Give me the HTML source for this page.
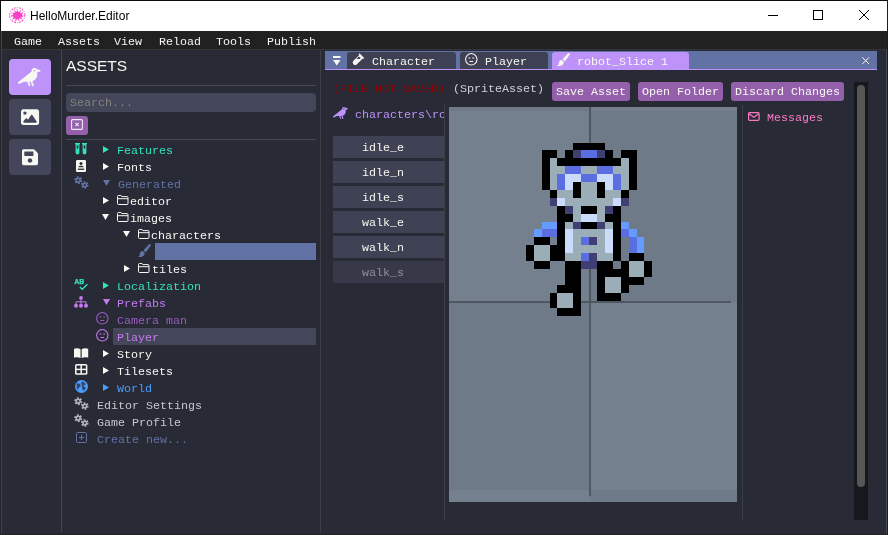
<!DOCTYPE html>
<html><head><meta charset="utf-8"><title>HelloMurder.Editor</title>
<style>
*{margin:0;padding:0;box-sizing:border-box}
html,body{width:888px;height:535px;overflow:hidden;background:#282a36}
body{position:relative;font-family:"Liberation Mono","DejaVu Sans Mono",monospace;font-size:11.67px;letter-spacing:0;color:#f8f8f2;line-height:17px}
.a{position:absolute}
.t{position:absolute;white-space:pre;height:17px}
.t,.btn span,.an span{will-change:transform}
#title{left:0;top:0;width:888px;height:31px;background:#fff}
#title .name{left:29.5px;top:8px;font-family:"Liberation Sans",sans-serif;font-size:12px;letter-spacing:0;color:#000;line-height:16px}
#menu{left:0;top:31px;width:888px;height:18px;background:#212121}
#menu .t{top:2.6px;color:#f4f4f0}
svg{position:absolute;overflow:visible}
.sb{left:9px;width:42px;height:36px;border-radius:4px;background:#43465b}
.btn{top:82px;height:19px;border-radius:3px;background:#9460ab;color:#f8f8f2}
.btn span{position:absolute;left:4px;top:2px;white-space:pre}
.an{left:333px;width:111px;height:22px;background:#3f4155}
.an span{position:absolute;left:29px;top:4px;white-space:pre}
#sprite i{position:absolute;display:block}
</style></head><body>
<!-- title bar -->
<div id="title" class="a">
  <svg style="left:9px;top:6.8px" width="16.4" height="16.400" viewBox="0 0 16 16"><circle cx="8" cy="8" r="7.400" fill="none" stroke="#fd55cc" stroke-width="1.100" stroke-dasharray="1.6 1.1 .8 1.300 2.100 1"/><circle cx="8" cy="8" r="5.600" fill="none" stroke="#fd55cc" stroke-width="1" stroke-dasharray=".9 2.300 1.200 1.900"/><path d="M8.500 3.200l.9 1.800 1.500-1 .3 1.900 2.200.3-.8 1.600 1.100 1.400-1.900.8.200 1.500-2.100-.3-.4 2.100-1.400-1.500-1.500 1.600-.5-2.200-2.300.3.500-1.700-1.500-1.200 1.300-1.200-.6-1.900 2.100-.1.200-1.600 1.600.9z" fill="#fb3fc6"/></svg>
  <div class="t name">HelloMurder.Editor</div>
  <svg style="left:768px;top:10px" width="101" height="11" viewBox="0 0 101 11" fill="none" stroke="#000" stroke-width="1"><path d="M0 5.500h10"/><rect x="45.500" y=".5" width="9" height="9"/><path d="M91 0l10 10M101 0l-10 10"/></svg>
</div>
<div class="a" style="left:0;top:0;width:888px;height:1px;background:#0c0c0c"></div><div class="a" style="left:0;top:0;width:1px;height:31px;background:#0c0c0c"></div>
<!-- menu -->
<div id="menu" class="a">
  <div class="t" style="left:14px">Game</div>
  <div class="t" style="left:57.5px">Assets</div>
  <div class="t" style="left:114px">View</div>
  <div class="t" style="left:159px">Reload</div>
  <div class="t" style="left:216px">Tools</div>
  <div class="t" style="left:267px">Publish</div>
</div>
<div class="a" style="left:0;top:49px;width:888px;height:1px;background:#34353c"></div>
<!-- window borders -->
<div class="a" style="left:0;top:31px;width:1px;height:504px;background:#222228"></div>
<div class="a" style="left:1px;top:31px;width:1px;height:503px;background:#404254"></div>
<div class="a" style="left:0;top:534px;width:888px;height:1px;background:#222224"></div>
<div class="a" style="left:886px;top:50px;width:1px;height:484px;background:#474a5c"></div><div class="a" style="left:887px;top:0;width:1px;height:535px;background:#1c1c1e"></div>
<!-- sidebar -->
<div class="a sb" style="top:59px;background:#bd93f9"></div>
<div class="a sb" style="top:99px"></div>
<div class="a sb" style="top:139px"></div>
<div class="a" style="left:61px;top:50px;width:1px;height:482px;background:#46464e"></div>
<svg style="left:17.8px;top:67.9px" width="22.7" height="18.2" viewBox="0 0 640 512" fill="#f8f8f2" fill-rule="evenodd"><path d="M544 32h-16.36C513.04 12.68 490.09 0 464 0c-44.18 0-80 35.82-80 80v20.98L12.09 393.57A30.216 30.216 0 0 0 0 417.74c0 22.46 23.64 37.07 43.73 27.03L165.27 384h96.49l44.41 120.1c2.27 6.23 9.15 9.44 15.38 7.17l22.55-8.21c6.23-2.27 9.44-9.15 7.17-15.38L312.94 384H352c1.91 0 3.76-.23 5.66-.29l44.51 120.38c2.27 6.23 9.15 9.44 15.38 7.17l22.55-8.21c6.23-2.27 9.44-9.15 7.17-15.38l-41.24-111.53C485.74 352.8 544 279.26 544 192v-80l96-16c0-35.35-42.98-64-96-64zm-80 72c-13.25 0-24-10.75-24-24 0-13.26 10.75-24 24-24s24 10.74 24 24c0 13.25-10.75 24-24 24z"/></svg>
<svg style="left:20.9px;top:108.2px" width="18.1" height="18.1" viewBox="0 0 512 512" fill="#f8f8f2" fill-rule="evenodd"><path d="M0 96C0 60.7 28.7 32 64 32H448c35.3 0 64 28.7 64 64V416c0 35.3-28.7 64-64 64H64c-35.3 0-64-28.7-64-64V96zM323.8 202.5c-4.500-6.600-11.900-10.500-19.800-10.500s-15.400 3.900-19.800 10.500l-87 127.600L170.700 297c-4.600-5.700-11.500-9-18.700-9s-14.200 3.300-18.700 9l-64 80c-5.800 7.200-6.900 17.100-2.900 25.400s12.400 13.600 21.600 13.600h96 32H424c8.900 0 17.100-4.900 21.200-12.800s3.600-17.400-1.400-24.700l-120-176zM112 192a48 48 0 1 0 0-96 48 48 0 1 0 0 96z"/></svg>
<svg style="left:22px;top:147.8px" width="16" height="18.3" viewBox="0 0 448 512" fill="#f8f8f2" fill-rule="evenodd"><path d="M433.941 129.941l-83.882-83.882A48 48 0 0 0 316.118 32H48C21.49 32 0 53.49 0 80v352c0 26.51 21.49 48 48 48h352c26.51 0 48-21.49 48-48V163.882a48 48 0 0 0-14.059-33.941zM224 416c-35.346 0-64-28.654-64-64 0-35.346 28.654-64 64-64s64 28.654 64 64c0 35.346-28.654 64-64 64zm96-304.52V212c0 6.627-5.373 12-12 12H76c-6.627 0-12-5.373-12-12V108c0-6.627 5.373-12 12-12h228.52c3.183 0 6.235 1.264 8.485 3.515l3.48 3.48A11.996 11.996 0 0 1 320 111.48z"/></svg>
<!-- assets panel -->
<div class="t" style="left:66px;top:56.4px;font-family:'Liberation Sans',sans-serif;font-size:15.5px;letter-spacing:0;line-height:20px;height:20px">ASSETS</div>
<div class="a" style="left:66px;top:85px;width:250px;height:1px;background:#44465a"></div>
<div class="a" style="left:66px;top:93px;width:250px;height:19px;border-radius:4px;background:#44475a"></div>
<div class="t" style="left:70px;top:95px;color:#85827e">Search...</div>
<div class="a" style="left:66px;top:116px;width:22px;height:19px;border-radius:3px;background:#9460ab"></div>
<svg style="left:71px;top:119px" width="12" height="11" viewBox="0 0 12 11" fill="none" stroke="#f0e8f8" stroke-width="1.1"><rect x=".6" y=".6" width="10.800" height="9.800" rx="1"/><path d="M4.300 3.800l3.400 3.400M7.700 3.800l-3.400 3.400"/></svg>
<div class="a" style="left:66px;top:139px;width:250px;height:1px;background:#44465a"></div>
<div class="a" style="left:320px;top:50px;width:1px;height:482px;background:#3c3d45"></div>
<!-- tree -->
<div class="a" style="left:155px;top:243px;width:161px;height:17px;background:#6272a4"></div>
<div class="a" style="left:113px;top:328px;width:203px;height:17px;background:#44475a"></div>
<svg style="left:75px;top:143px" width="12" height="12" viewBox="0 0 12 12" fill="#33e2bc"><path d="M0 0h5v1.300h-.6v8.200a1.900 1.900 0 0 1-3.800 0v-8.200h-.6z"/><path d="M7 0h5v1.300h-.6v8.200a1.900 1.900 0 0 1-3.800 0v-8.200h-.6z"/><rect x="1.700" y="2.500" width="1.600" height="3" fill="#282a36"/><rect x="8.700" y="2.500" width="1.600" height="3" fill="#282a36"/></svg>
<svg style="left:103.4px;top:145.5px" width="6" height="7" viewBox="0 0 6 7"><path d="M0 0v7l6-3.500z" fill="#33e2bc"/></svg>
<div class="t" style="left:117px;top:142.5px;color:#33e2bc">Features</div>
<svg style="left:76px;top:159.5px" width="10" height="12" viewBox="0 0 10 12"><rect width="10" height="12" rx="1.200" fill="#f8f8f2"/><circle cx="5" cy="3.600" r="1.500" fill="#282a36"/><path d="M2.200 7.200c0-2 5.600-2 5.600 0z" fill="#282a36"/><rect x="1.800" y="8.600" width="6.400" height="1.300" fill="#282a36"/></svg>
<svg style="left:103.4px;top:162.5px" width="6" height="7" viewBox="0 0 6 7"><path d="M0 0v7l6-3.500z" fill="#f8f8f2"/></svg>
<div class="t" style="left:117px;top:159.5px;color:#f8f8f2">Fonts</div>
<svg style="left:74px;top:176px" width="15" height="13" viewBox="0 0 15 13" fill="none" stroke="#6272a4"><circle cx="4.200" cy="4.200" r="2.800" stroke-width="2.400" stroke-dasharray="1.600 1.330"/><circle cx="4.200" cy="4.200" r="1.900" stroke-width="1.600"/><circle cx="10.800" cy="9" r="2.700" stroke-width="2.300" stroke-dasharray="1.550 1.280"/><circle cx="10.800" cy="9" r="1.800" stroke-width="1.500"/></svg>
<svg style="left:103.4px;top:180px" width="7" height="6" viewBox="0 0 7 6"><path d="M0 0h7l-3.500 6z" fill="#6272a4"/></svg>
<div class="t" style="left:118px;top:176.5px;color:#6272a4">Generated</div>
<svg style="left:103.4px;top:196.5px" width="6" height="7" viewBox="0 0 6 7"><path d="M0 0v7l6-3.500z" fill="#f8f8f2"/></svg>
<svg style="left:117px;top:195.0px" width="11.5" height="10" viewBox="0 0 11.5 10" fill="none" stroke="#f8f8f2" stroke-width="1"><path d="M.5 1.500a1 1 0 0 1 1-1h2.400l1.100 1.100h5a1 1 0 0 1 1 1v5.900a1 1 0 0 1-1 1h-8.500a1 1 0 0 1-1-1z"/><path d="M.5 3.700h10.500"/></svg>
<div class="t" style="left:130px;top:193.5px;color:#f8f8f2">editor</div>
<svg style="left:102.4px;top:214px" width="7" height="6" viewBox="0 0 7 6"><path d="M0 0h7l-3.500 6z" fill="#f8f8f2"/></svg>
<svg style="left:117px;top:212.0px" width="11.5" height="10" viewBox="0 0 11.5 10" fill="none" stroke="#f8f8f2" stroke-width="1"><path d="M.5 1.500a1 1 0 0 1 1-1h2.400l1.100 1.100h5a1 1 0 0 1 1 1v5.900a1 1 0 0 1-1 1h-8.500a1 1 0 0 1-1-1z"/><path d="M.5 3.700h10.500"/></svg>
<div class="t" style="left:130px;top:210.5px;color:#f8f8f2">images</div>
<svg style="left:123.4px;top:231px" width="7" height="6" viewBox="0 0 7 6"><path d="M0 0h7l-3.500 6z" fill="#f8f8f2"/></svg>
<svg style="left:138px;top:229.0px" width="11.5" height="10" viewBox="0 0 11.5 10" fill="none" stroke="#f8f8f2" stroke-width="1"><path d="M.5 1.500a1 1 0 0 1 1-1h2.400l1.100 1.100h5a1 1 0 0 1 1 1v5.900a1 1 0 0 1-1 1h-8.500a1 1 0 0 1-1-1z"/><path d="M.5 3.700h10.500"/></svg>
<div class="t" style="left:151px;top:227.5px;color:#f8f8f2">characters</div>
<svg style="left:138px;top:244px" width="13" height="13" viewBox="0 0 13 13" fill="#6272a4"><path d="M12.600.3c.5.500.3 1.200-.1 1.800l-4.700 6.400-2.300-2.300 5.300-5.700c.5-.5 1.300-.7 1.800-.2z"/><path d="M4.700 7l2 2c.2 2.300-1.600 3.900-3.800 3.900h-2.900c1.500-.5 1.700-1.500 1.800-2.800.1-1.900 1.300-3.100 2.900-3.100z"/></svg>
<svg style="left:124.4px;top:264.5px" width="6" height="7" viewBox="0 0 6 7"><path d="M0 0v7l6-3.500z" fill="#f8f8f2"/></svg>
<svg style="left:138px;top:263.0px" width="11.5" height="10" viewBox="0 0 11.5 10" fill="none" stroke="#f8f8f2" stroke-width="1"><path d="M.5 1.500a1 1 0 0 1 1-1h2.400l1.100 1.100h5a1 1 0 0 1 1 1v5.900a1 1 0 0 1-1 1h-8.500a1 1 0 0 1-1-1z"/><path d="M.5 3.700h10.500"/></svg>
<div class="t" style="left:151.5px;top:261.5px;color:#f8f8f2">tiles</div>
<svg style="left:74px;top:278px" width="14" height="14" viewBox="0 0 14 14"><text x="0.3" y="6" font-family="Liberation Sans,sans-serif" font-weight="bold" font-size="6.9" letter-spacing="0" stroke="#33e2bc" stroke-width=".25" fill="#33e2bc">AB</text><path d="M5.900 9l2.300 2.300 5.200-5" fill="none" stroke="#33e2bc" stroke-width="1.400"/></svg>
<svg style="left:103.4px;top:281.5px" width="6" height="7" viewBox="0 0 6 7"><path d="M0 0v7l6-3.500z" fill="#33e2bc"/></svg>
<div class="t" style="left:117px;top:278.5px;color:#33e2bc">Localization</div>
<svg style="left:74px;top:296px" width="14" height="12" viewBox="0 0 14 12" fill="#c77af2"><circle cx="7" cy="1.900" r="1.900"/><circle cx="2" cy="9.700" r="2"/><circle cx="7" cy="9.700" r="2"/><circle cx="12" cy="9.700" r="2"/><path d="M7 3.500v5M2 8.200v-2.400h10v2.400" fill="none" stroke="#c77af2" stroke-width="1"/></svg>
<svg style="left:103.4px;top:299px" width="7" height="6" viewBox="0 0 7 6"><path d="M0 0h7l-3.500 6z" fill="#c77af2"/></svg>
<div class="t" style="left:117px;top:295.5px;color:#c77af2">Prefabs</div>
<svg style="left:96px;top:312px" width="12.6" height="12.6" viewBox="0 0 13 13" fill="none" stroke="#9a5cc0" stroke-width="1.100"><circle cx="6.500" cy="6.500" r="5.900"/><path d="M4.600 8.700h3.800M3.600 5.200h1.900M7.500 5.200h1.900"/></svg>
<div class="t" style="left:117px;top:312.5px;color:#9a5cc0">Camera man</div>
<svg style="left:96px;top:329px" width="12.6" height="12.6" viewBox="0 0 13 13" fill="none" stroke="#c77af2" stroke-width="1.100"><circle cx="6.500" cy="6.500" r="5.900"/><path d="M4.600 8.700h3.800M3.600 5.200h1.900M7.500 5.200h1.900"/></svg>
<div class="t" style="left:117px;top:329.5px;color:#c77af2">Player</div>
<svg style="left:74px;top:347.5px" width="14.2" height="10.500" viewBox="0 0 15 11" preserveAspectRatio="none" fill="#f8f8f2"><path d="M0 .8c2.500-1 5-.8 6.900.4v9.400c-2-1-4.400-1.100-6.900-.4z"/><path d="M15 .8c-2.500-1-5-.8-6.900.4v9.400c2-1 4.400-1.100 6.900-.4z"/></svg>
<svg style="left:103.4px;top:349.5px" width="6" height="7" viewBox="0 0 6 7"><path d="M0 0v7l6-3.500z" fill="#f8f8f2"/></svg>
<div class="t" style="left:117px;top:346.5px;color:#f8f8f2">Story</div>
<svg style="left:75px;top:364px" width="12.4" height="10.800" viewBox="0 0 13 12" preserveAspectRatio="none"><rect width="13" height="12" rx="1.800" fill="#f8f8f2"/><rect x="1.600" y="1.700" width="4.100" height="3.500" fill="#282a36"/><rect x="7.300" y="1.700" width="4.100" height="3.500" fill="#282a36"/><rect x="1.600" y="6.800" width="4.100" height="3.500" fill="#282a36"/><rect x="7.300" y="6.800" width="4.100" height="3.500" fill="#282a36"/></svg>
<svg style="left:103.4px;top:366.5px" width="6" height="7" viewBox="0 0 6 7"><path d="M0 0v7l6-3.500z" fill="#f8f8f2"/></svg>
<div class="t" style="left:117px;top:363.5px;color:#f8f8f2">Tilesets</div>
<svg style="left:75px;top:380px" width="13" height="13" viewBox="0 0 13 13"><circle cx="6.500" cy="6.500" r="6.500" fill="#4a9dff"/><path d="M2 3.500c1.500-.5 2.500.5 3.500 1.500s-.5 2-1.500 2.500-.5 2.500-1 2.500-2-3-1-6.500zM7.500 1.500c1 .5 2.500 1 3 2.500s-1.500.5-2 1.500 1.500 1 2 2-1 3-2 3-1-2-1.500-3 .5-2-.5-3 0-2.500 1-3z" fill="#282a36" opacity=".75"/></svg>
<svg style="left:103.4px;top:383.5px" width="6" height="7" viewBox="0 0 6 7"><path d="M0 0v7l6-3.500z" fill="#4a9dff"/></svg>
<div class="t" style="left:117px;top:380.5px;color:#4a9dff">World</div>
<svg style="left:74px;top:397px" width="15" height="13" viewBox="0 0 15 13" fill="none" stroke="#b2b2ba"><circle cx="4.200" cy="4.200" r="2.800" stroke-width="2.400" stroke-dasharray="1.600 1.330"/><circle cx="4.200" cy="4.200" r="1.900" stroke-width="1.600"/><circle cx="10.800" cy="9" r="2.700" stroke-width="2.300" stroke-dasharray="1.550 1.280"/><circle cx="10.800" cy="9" r="1.800" stroke-width="1.500"/></svg>
<div class="t" style="left:97px;top:397.5px;color:#c6c6cc">Editor Settings</div>
<svg style="left:74px;top:414px" width="15" height="13" viewBox="0 0 15 13" fill="none" stroke="#b2b2ba"><circle cx="4.200" cy="4.200" r="2.800" stroke-width="2.400" stroke-dasharray="1.600 1.330"/><circle cx="4.200" cy="4.200" r="1.900" stroke-width="1.600"/><circle cx="10.800" cy="9" r="2.700" stroke-width="2.300" stroke-dasharray="1.550 1.280"/><circle cx="10.800" cy="9" r="1.800" stroke-width="1.500"/></svg>
<div class="t" style="left:97px;top:414.5px;color:#c6c6cc">Game Profile</div>
<svg style="left:76px;top:432px" width="11" height="11" viewBox="0 0 11 11" fill="none" stroke="#6272a4" stroke-width="1"><rect x=".5" y=".5" width="10" height="10" rx="1.200"/><path d="M5.500 3v5M3 5.500h5"/></svg>
<div class="t" style="left:97px;top:431.5px;color:#6272a4">Create new...</div>
<!-- tab bar -->
<div class="a" style="left:325px;top:51px;width:552px;height:18px;background:#6272a4"></div>
<div class="a" style="left:325px;top:69px;width:552px;height:1px;background:#bd93f9"></div>
<div class="a" style="left:347px;top:52px;width:109px;height:17px;border-radius:3px 3px 0 0;background:#3e4054"></div>
<div class="a" style="left:460px;top:52px;width:88px;height:17px;border-radius:3px 3px 0 0;background:#3e4054"></div>
<div class="a" style="left:552px;top:52px;width:137px;height:18px;border-radius:3px 3px 0 0;background:#bd93f9"></div>
<div class="t" style="left:372px;top:53.5px">Character</div>
<div class="t" style="left:485px;top:53.5px">Player</div>
<div class="t" style="left:577px;top:53.5px">robot_Slice 1</div>
<svg style="left:333px;top:55.7px" width="7.5" height="9.500" viewBox="0 0 7.500 9.500" fill="#f8f8f2"><rect width="7.500" height="2"/><path d="M0 3.900h7.500l-3.750 5.600z"/></svg>
<svg style="left:351.8px;top:53.3px" width="12.5" height="12.5" viewBox="0 0 12 12" fill="#f8f8f2"><path d="M7.200.3l4.500 4.500-.9.900-.5-.5-5.600 5.600a2.300 2.300 0 0 1-3.300-3.300l5.600-5.600-.6-.6z"/><path d="M6.600 3.300l-2.400 2.400h3.400l.8-.8z" fill="#3e4054"/></svg>
<svg style="left:465px;top:53px" width="12.6" height="12.6" viewBox="0 0 13 13" fill="none" stroke="#f8f8f2" stroke-width="1.100"><circle cx="6.500" cy="6.500" r="5.900"/><path d="M4.600 8.700h3.800M3.600 5.200h1.900M7.500 5.200h1.900"/></svg>
<svg style="left:557px;top:53px" width="13" height="13" viewBox="0 0 13 13" fill="#f8f8f2"><path d="M12.600.3c.5.500.3 1.200-.1 1.800l-4.700 6.400-2.300-2.300 5.300-5.700c.5-.5 1.300-.7 1.800-.2z"/><path d="M4.700 7l2 2c.2 2.300-1.600 3.900-3.800 3.900h-2.900c1.500-.5 1.700-1.500 1.800-2.800.1-1.900 1.300-3.100 2.900-3.100z"/></svg>
<svg style="left:861.8px;top:56.8px" width="7.4" height="7.400" viewBox="0 0 7.400 7.400" stroke="#f8f8f2" stroke-width="1"><path d="M.3.300l6.800 6.800M7.100.3l-6.800 6.800"/></svg>
<svg style="left:333px;top:106.5px" width="15" height="12" viewBox="0 0 640 512" fill="#bd93f9" fill-rule="evenodd"><path d="M544 32h-16.36C513.04 12.68 490.09 0 464 0c-44.18 0-80 35.82-80 80v20.98L12.09 393.57A30.216 30.216 0 0 0 0 417.74c0 22.46 23.64 37.07 43.73 27.03L165.27 384h96.49l44.41 120.1c2.27 6.23 9.15 9.44 15.38 7.17l22.55-8.21c6.23-2.27 9.44-9.15 7.17-15.38L312.94 384H352c1.91 0 3.76-.23 5.66-.29l44.51 120.38c2.27 6.23 9.15 9.44 15.38 7.17l22.55-8.21c6.23-2.27 9.44-9.15 7.17-15.38l-41.24-111.53C485.74 352.8 544 279.26 544 192v-80l96-16c0-35.35-42.98-64-96-64zm-80 72c-13.25 0-24-10.75-24-24 0-13.26 10.75-24 24-24s24 10.74 24 24c0 13.25-10.75 24-24 24z"/></svg>
<!-- header row -->
<div class="t" style="left:333px;top:81px;color:#8e0000">(FILE NOT SAVED)</div>
<div class="t" style="left:453px;top:81px;color:#cfcfd6">(SpriteAsset)</div>
<div class="a btn" style="left:552px;width:78px"><span>Save Asset</span></div>
<div class="a btn" style="left:638px;width:85px"><span>Open Folder</span></div>
<div class="a btn" style="left:731px;width:113px"><span>Discard Changes</span></div>
<!-- scrollbar -->
<div class="a" style="left:854px;top:82px;width:14px;height:438px;background:#17181e"></div>
<div class="a" style="left:857px;top:85px;width:8px;height:402px;border-radius:4px;background:#565656"></div>
<!-- anim list -->
<div class="t" style="left:355px;top:107px;color:#bd93f9;width:89px;overflow:hidden">characters\robot</div>
<div class="a an" style="top:136px"><span>idle_e</span></div>
<div class="a an" style="top:161px"><span>idle_n</span></div>
<div class="a an" style="top:186px"><span>idle_s</span></div>
<div class="a an" style="top:211px"><span>walk_e</span></div>
<div class="a an" style="top:236px"><span>walk_n</span></div>
<div class="a an" style="top:261px;background:#373949;color:#8d8f9d"><span>walk_s</span></div>
<div class="a" style="left:444px;top:105px;width:1px;height:415px;background:#3c3d46"></div>
<!-- canvas -->
<div class="a" style="left:449px;top:107px;width:288px;height:395px;background:#74808e"></div>
<div class="a" style="left:590px;top:107px;width:147px;height:195px;background:#6e7a88"></div>
<div class="a" style="left:449px;top:107px;width:141px;height:4px;background:#6e7a88"></div><div class="a" style="left:590px;top:107px;width:147px;height:4px;background:#74808e"></div>
<div class="a" style="left:449px;top:302px;width:141px;height:188px;background:#6e7a88"></div>
<div class="a" style="left:449px;top:490px;width:141px;height:12px;background:#74808e"></div><div class="a" style="left:590px;top:490px;width:147px;height:12px;background:#6e7a88"></div>
<div class="a" style="left:449px;top:301px;width:282px;height:2px;background:#4f5762"></div>
<div class="a" style="left:589px;top:107px;width:2px;height:389px;background:#4f5762"></div>
<div id="sprite">
<i style="left:573px;top:143px;width:32px;height:7px;background:#000"></i>
<i style="left:542px;top:150px;width:15px;height:8px;background:#000"></i>
<i style="left:565px;top:150px;width:8px;height:8px;background:#000"></i>
<i style="left:573px;top:150px;width:8px;height:8px;background:#3f3f74"></i>
<i style="left:581px;top:150px;width:16px;height:8px;background:#5b6ee1"></i>
<i style="left:597px;top:150px;width:8px;height:8px;background:#3f3f74"></i>
<i style="left:605px;top:150px;width:8px;height:8px;background:#000"></i>
<i style="left:621px;top:150px;width:16px;height:8px;background:#000"></i>
<i style="left:542px;top:158px;width:8px;height:8px;background:#000"></i>
<i style="left:550px;top:158px;width:7px;height:8px;background:#9badb7"></i>
<i style="left:557px;top:158px;width:64px;height:8px;background:#000"></i>
<i style="left:621px;top:158px;width:8px;height:8px;background:#9badb7"></i>
<i style="left:629px;top:158px;width:8px;height:8px;background:#000"></i>
<i style="left:542px;top:166px;width:8px;height:8px;background:#000"></i>
<i style="left:550px;top:166px;width:15px;height:8px;background:#9badb7"></i>
<i style="left:565px;top:166px;width:16px;height:8px;background:#5b6ee1"></i>
<i style="left:581px;top:166px;width:16px;height:8px;background:#9badb7"></i>
<i style="left:597px;top:166px;width:16px;height:8px;background:#5b6ee1"></i>
<i style="left:613px;top:166px;width:16px;height:8px;background:#9badb7"></i>
<i style="left:629px;top:166px;width:8px;height:8px;background:#000"></i>
<i style="left:542px;top:174px;width:8px;height:8px;background:#000"></i>
<i style="left:550px;top:174px;width:7px;height:8px;background:#9badb7"></i>
<i style="left:557px;top:174px;width:8px;height:8px;background:#5b6ee1"></i>
<i style="left:565px;top:174px;width:16px;height:8px;background:#cbdbfc"></i>
<i style="left:581px;top:174px;width:16px;height:8px;background:#5b6ee1"></i>
<i style="left:597px;top:174px;width:16px;height:8px;background:#cbdbfc"></i>
<i style="left:613px;top:174px;width:8px;height:8px;background:#5b6ee1"></i>
<i style="left:621px;top:174px;width:8px;height:8px;background:#9badb7"></i>
<i style="left:629px;top:174px;width:8px;height:8px;background:#000"></i>
<i style="left:542px;top:182px;width:8px;height:8px;background:#000"></i>
<i style="left:550px;top:182px;width:7px;height:8px;background:#9badb7"></i>
<i style="left:557px;top:182px;width:8px;height:8px;background:#5b6ee1"></i>
<i style="left:565px;top:182px;width:8px;height:8px;background:#cbdbfc"></i>
<i style="left:573px;top:182px;width:8px;height:8px;background:#000"></i>
<i style="left:581px;top:182px;width:16px;height:8px;background:#9badb7"></i>
<i style="left:597px;top:182px;width:8px;height:8px;background:#000"></i>
<i style="left:605px;top:182px;width:8px;height:8px;background:#cbdbfc"></i>
<i style="left:613px;top:182px;width:8px;height:8px;background:#5b6ee1"></i>
<i style="left:621px;top:182px;width:8px;height:8px;background:#9badb7"></i>
<i style="left:629px;top:182px;width:8px;height:8px;background:#000"></i>
<i style="left:550px;top:190px;width:7px;height:8px;background:#000"></i>
<i style="left:557px;top:190px;width:16px;height:8px;background:#9badb7"></i>
<i style="left:573px;top:190px;width:8px;height:8px;background:#000"></i>
<i style="left:581px;top:190px;width:16px;height:8px;background:#9badb7"></i>
<i style="left:597px;top:190px;width:8px;height:8px;background:#000"></i>
<i style="left:605px;top:190px;width:16px;height:8px;background:#9badb7"></i>
<i style="left:621px;top:190px;width:8px;height:8px;background:#000"></i>
<i style="left:550px;top:198px;width:7px;height:8px;background:#3f3f74"></i>
<i style="left:557px;top:198px;width:8px;height:8px;background:#cbdbfc"></i>
<i style="left:565px;top:198px;width:48px;height:8px;background:#9badb7"></i>
<i style="left:613px;top:198px;width:8px;height:8px;background:#cbdbfc"></i>
<i style="left:621px;top:198px;width:8px;height:8px;background:#3f3f74"></i>
<i style="left:557px;top:206px;width:8px;height:8px;background:#000"></i>
<i style="left:565px;top:206px;width:8px;height:8px;background:#3f3f74"></i>
<i style="left:573px;top:206px;width:8px;height:8px;background:#9badb7"></i>
<i style="left:581px;top:206px;width:16px;height:8px;background:#000"></i>
<i style="left:597px;top:206px;width:8px;height:8px;background:#9badb7"></i>
<i style="left:605px;top:206px;width:8px;height:8px;background:#3f3f74"></i>
<i style="left:613px;top:206px;width:8px;height:8px;background:#000"></i>
<i style="left:557px;top:214px;width:16px;height:8px;background:#000"></i>
<i style="left:573px;top:214px;width:8px;height:8px;background:#9badb7"></i>
<i style="left:581px;top:214px;width:16px;height:8px;background:#cbdbfc"></i>
<i style="left:597px;top:214px;width:8px;height:8px;background:#9badb7"></i>
<i style="left:605px;top:214px;width:16px;height:8px;background:#000"></i>
<i style="left:542px;top:222px;width:15px;height:7px;background:#639bff"></i>
<i style="left:557px;top:222px;width:8px;height:7px;background:#000"></i>
<i style="left:565px;top:222px;width:8px;height:7px;background:#9badb7"></i>
<i style="left:573px;top:222px;width:8px;height:7px;background:#3f3f74"></i>
<i style="left:581px;top:222px;width:16px;height:7px;background:#000"></i>
<i style="left:597px;top:222px;width:8px;height:7px;background:#3f3f74"></i>
<i style="left:605px;top:222px;width:8px;height:7px;background:#9badb7"></i>
<i style="left:613px;top:222px;width:8px;height:7px;background:#000"></i>
<i style="left:621px;top:222px;width:8px;height:7px;background:#639bff"></i>
<i style="left:534px;top:229px;width:8px;height:8px;background:#639bff"></i>
<i style="left:542px;top:229px;width:15px;height:8px;background:#5b6ee1"></i>
<i style="left:557px;top:229px;width:8px;height:8px;background:#000"></i>
<i style="left:565px;top:229px;width:8px;height:8px;background:#cbdbfc"></i>
<i style="left:573px;top:229px;width:32px;height:8px;background:#9badb7"></i>
<i style="left:605px;top:229px;width:8px;height:8px;background:#cbdbfc"></i>
<i style="left:613px;top:229px;width:8px;height:8px;background:#000"></i>
<i style="left:621px;top:229px;width:8px;height:8px;background:#5b6ee1"></i>
<i style="left:629px;top:229px;width:8px;height:8px;background:#639bff"></i>
<i style="left:534px;top:237px;width:16px;height:8px;background:#000"></i>
<i style="left:557px;top:237px;width:8px;height:8px;background:#000"></i>
<i style="left:565px;top:237px;width:8px;height:8px;background:#cbdbfc"></i>
<i style="left:573px;top:237px;width:8px;height:8px;background:#9badb7"></i>
<i style="left:581px;top:237px;width:8px;height:8px;background:#5b6ee1"></i>
<i style="left:589px;top:237px;width:8px;height:8px;background:#3f3f74"></i>
<i style="left:597px;top:237px;width:8px;height:8px;background:#9badb7"></i>
<i style="left:605px;top:237px;width:8px;height:8px;background:#cbdbfc"></i>
<i style="left:613px;top:237px;width:8px;height:8px;background:#000"></i>
<i style="left:629px;top:237px;width:8px;height:8px;background:#5b6ee1"></i>
<i style="left:637px;top:237px;width:7px;height:8px;background:#639bff"></i>
<i style="left:526px;top:245px;width:8px;height:8px;background:#000"></i>
<i style="left:534px;top:245px;width:16px;height:8px;background:#9badb7"></i>
<i style="left:550px;top:245px;width:15px;height:8px;background:#000"></i>
<i style="left:565px;top:245px;width:8px;height:8px;background:#cbdbfc"></i>
<i style="left:573px;top:245px;width:32px;height:8px;background:#9badb7"></i>
<i style="left:605px;top:245px;width:8px;height:8px;background:#cbdbfc"></i>
<i style="left:613px;top:245px;width:8px;height:8px;background:#000"></i>
<i style="left:629px;top:245px;width:8px;height:8px;background:#5b6ee1"></i>
<i style="left:637px;top:245px;width:7px;height:8px;background:#639bff"></i>
<i style="left:526px;top:253px;width:8px;height:8px;background:#000"></i>
<i style="left:534px;top:253px;width:16px;height:8px;background:#9badb7"></i>
<i style="left:550px;top:253px;width:15px;height:8px;background:#000"></i>
<i style="left:565px;top:253px;width:16px;height:8px;background:#9badb7"></i>
<i style="left:581px;top:253px;width:8px;height:8px;background:#5b6ee1"></i>
<i style="left:589px;top:253px;width:8px;height:8px;background:#3f3f74"></i>
<i style="left:597px;top:253px;width:16px;height:8px;background:#9badb7"></i>
<i style="left:613px;top:253px;width:8px;height:8px;background:#000"></i>
<i style="left:629px;top:253px;width:15px;height:8px;background:#000"></i>
<i style="left:534px;top:261px;width:16px;height:8px;background:#000"></i>
<i style="left:565px;top:261px;width:16px;height:8px;background:#000"></i>
<i style="left:581px;top:261px;width:16px;height:8px;background:#3f3f74"></i>
<i style="left:597px;top:261px;width:16px;height:8px;background:#000"></i>
<i style="left:621px;top:261px;width:8px;height:8px;background:#000"></i>
<i style="left:629px;top:261px;width:15px;height:8px;background:#9badb7"></i>
<i style="left:644px;top:261px;width:8px;height:8px;background:#000"></i>
<i style="left:565px;top:269px;width:16px;height:8px;background:#000"></i>
<i style="left:597px;top:269px;width:32px;height:8px;background:#000"></i>
<i style="left:629px;top:269px;width:15px;height:8px;background:#9badb7"></i>
<i style="left:644px;top:269px;width:8px;height:8px;background:#000"></i>
<i style="left:565px;top:277px;width:16px;height:8px;background:#000"></i>
<i style="left:597px;top:277px;width:8px;height:8px;background:#000"></i>
<i style="left:605px;top:277px;width:16px;height:8px;background:#9badb7"></i>
<i style="left:621px;top:277px;width:23px;height:8px;background:#000"></i>
<i style="left:557px;top:285px;width:24px;height:8px;background:#000"></i>
<i style="left:597px;top:285px;width:8px;height:8px;background:#000"></i>
<i style="left:605px;top:285px;width:16px;height:8px;background:#9badb7"></i>
<i style="left:621px;top:285px;width:8px;height:8px;background:#000"></i>
<i style="left:550px;top:293px;width:7px;height:8px;background:#000"></i>
<i style="left:557px;top:293px;width:16px;height:8px;background:#9badb7"></i>
<i style="left:573px;top:293px;width:8px;height:8px;background:#000"></i>
<i style="left:597px;top:293px;width:24px;height:8px;background:#000"></i>
<i style="left:550px;top:301px;width:7px;height:7px;background:#000"></i>
<i style="left:557px;top:301px;width:16px;height:7px;background:#9badb7"></i>
<i style="left:573px;top:301px;width:8px;height:7px;background:#000"></i>
<i style="left:557px;top:308px;width:24px;height:8px;background:#000"></i>
</div>
<!-- messages -->
<div class="a" style="left:742px;top:105px;width:1px;height:415px;background:#3c3d46"></div>
<svg style="left:748.2px;top:111.6px" width="11.7" height="9" viewBox="0 0 13 10" fill="none" stroke="#ff79c6" stroke-width="1.300"><rect x=".65" y=".65" width="11.700" height="8.700" rx="1.300"/><path d="M1 2l5.500 3.800L12 2"/></svg>
<div class="t" style="left:767px;top:110px;color:#ff79c6">Messages</div>
</body></html>
